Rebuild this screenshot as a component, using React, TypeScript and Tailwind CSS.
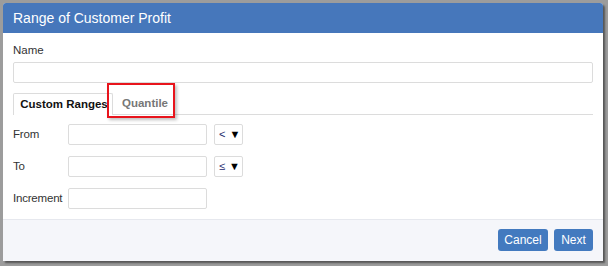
const font = { fontFamily: '"Liberation Sans", Arial, sans-serif' };

function Row({ label, op }: { label: string; op?: string }) {
  return (
    <div className="flex h-[21px] items-center">
      <div className="w-[55px] shrink-0 text-[11.5px] tracking-[-0.2px] text-[#333]">{label}</div>
      <div className="h-[21px] w-[139px] rounded-[2px] border border-[#dcdcdc] bg-white" />
      {op && (
        <div className="ml-[7px] flex h-[21px] w-[29px] items-center gap-[4px] rounded-[2px] border border-[#dcdcdc] bg-white pl-[4px] text-[11px] text-[#222]">
          <span className="text-[#1b2a6b]">{op}</span>
          <span className="text-[11px] leading-none text-black">▼</span>
        </div>
      )}
    </div>
  );
}

export default function App() {
  return (
    <div className="h-[266px] w-[608px] bg-[#9c9c9c] pl-[3px] pt-[3px]" style={font}>
      <div className="flex h-[258px] w-[600px] flex-col overflow-hidden rounded-t-[3px] bg-white shadow-[2px_2px_2px_rgba(0,0,0,0.45)]">
        {/* header */}
        <div className="flex h-[30px] items-center bg-[#4677bb] pl-[10px] text-[14px] text-white">
          Range of Customer Profit
        </div>

        {/* body */}
        <div className="flex flex-col px-[10px] pb-[10px] pt-[10px]">
          <div className="h-[14px] text-[11.5px] leading-[14px] text-[#333]">Name</div>
          <div className="mt-[5px] h-[21px] rounded-[2px] border border-[#dcdcdc] bg-white" />

          {/* tabs */}
          <div className="relative mt-[10px] flex h-[22px] border-b border-[#dcdcdc]">
            <div className="-mb-px flex h-[22px] w-[100px] items-center justify-center rounded-t-[2px] border border-b-0 border-[#dcdcdc] bg-white pl-[2px] text-[11.5px] font-bold text-[#111]">
              Custom Ranges
            </div>
            <div className="flex h-[21px] items-center pl-[9px] text-[11.5px] font-bold text-[#777]">
              Quantile
            </div>
            <div className="absolute left-[94px] top-[-10px] h-[35px] w-[68px] border-2 border-[#e8141c] shadow-[2px_2px_3px_rgba(0,0,0,0.25)]" />
          </div>

          {/* form */}
          <div className="mt-[9px] flex flex-col gap-[11px]">
            <Row label="From" op="<" />
            <Row label="To" op="≤" />
            <Row label="Increment" />
          </div>
        </div>

        {/* footer */}
        <div className="flex flex-1 items-start justify-end gap-[6px] border-t border-[#e6e8ee] bg-[#f5f6fa] pr-[10px] pt-[9px]">
          <button className="h-[22px] w-[50px] rounded-[3px] bg-[#437abf] text-[12px] text-white">Cancel</button>
          <button className="h-[22px] w-[39px] rounded-[3px] bg-[#437abf] text-[12px] text-white">Next</button>
        </div>
      </div>
    </div>
  );
}
